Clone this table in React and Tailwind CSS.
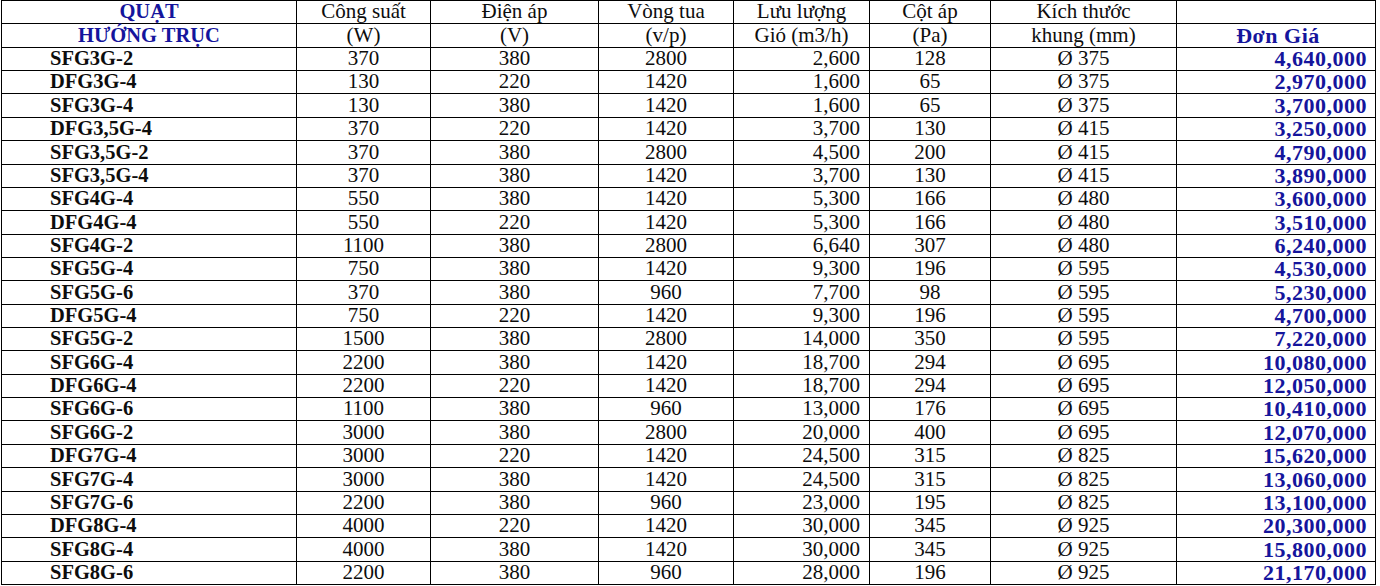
import React from 'react';

// Bảng giá quạt hướng trục
const rows = [
  ['SFG3G-2', '370', '380', '2800', '2,600', '128', '375', '4,640,000'],
  ['DFG3G-4', '130', '220', '1420', '1,600', '65', '375', '2,970,000'],
  ['SFG3G-4', '130', '380', '1420', '1,600', '65', '375', '3,700,000'],
  ['DFG3,5G-4', '370', '220', '1420', '3,700', '130', '415', '3,250,000'],
  ['SFG3,5G-2', '370', '380', '2800', '4,500', '200', '415', '4,790,000'],
  ['SFG3,5G-4', '370', '380', '1420', '3,700', '130', '415', '3,890,000'],
  ['SFG4G-4', '550', '380', '1420', '5,300', '166', '480', '3,600,000'],
  ['DFG4G-4', '550', '220', '1420', '5,300', '166', '480', '3,510,000'],
  ['SFG4G-2', '1100', '380', '2800', '6,640', '307', '480', '6,240,000'],
  ['SFG5G-4', '750', '380', '1420', '9,300', '196', '595', '4,530,000'],
  ['SFG5G-6', '370', '380', '960', '7,700', '98', '595', '5,230,000'],
  ['DFG5G-4', '750', '220', '1420', '9,300', '196', '595', '4,700,000'],
  ['SFG5G-2', '1500', '380', '2800', '14,000', '350', '595', '7,220,000'],
  ['SFG6G-4', '2200', '380', '1420', '18,700', '294', '695', '10,080,000'],
  ['DFG6G-4', '2200', '220', '1420', '18,700', '294', '695', '12,050,000'],
  ['SFG6G-6', '1100', '380', '960', '13,000', '176', '695', '10,410,000'],
  ['SFG6G-2', '3000', '380', '2800', '20,000', '400', '695', '12,070,000'],
  ['DFG7G-4', '3000', '220', '1420', '24,500', '315', '825', '15,620,000'],
  ['SFG7G-4', '3000', '380', '1420', '24,500', '315', '825', '13,060,000'],
  ['SFG7G-6', '2200', '380', '960', '23,000', '195', '825', '13,100,000'],
  ['DFG8G-4', '4000', '220', '1420', '30,000', '345', '925', '20,300,000'],
  ['SFG8G-4', '4000', '380', '1420', '30,000', '345', '925', '15,800,000'],
  ['SFG8G-6', '2200', '380', '960', '28,000', '196', '925', '21,170,000'],
];

const cell = 'border-r border-b border-black flex items-end whitespace-nowrap';

const Cell = ({ className = '', children }) => (
  <div className={`${cell} ${className}`}>
    <span className="leading-[23px]">{children}</span>
  </div>
);

const App = () => {
  return (
    <div className="min-h-screen bg-white">
      <div className="ml-px w-[1375px] grid grid-cols-[295px_134px_168px_135px_136px_121px_186px_199px] auto-rows-[23.36px] border-t border-l border-black font-['Liberation_Serif',serif] text-[21px] text-[#0d0d0d]">
        {/* header row 1 */}
        <Cell className="justify-center font-bold text-[20.5px] text-[#15159c]">QUẠT</Cell>
        <Cell className="justify-center">Công suất</Cell>
        <Cell className="justify-center">Điện áp</Cell>
        <Cell className="justify-center">Vòng tua</Cell>
        <Cell className="justify-center">Lưu lượng</Cell>
        <Cell className="justify-center">Cột áp</Cell>
        <Cell className="justify-center">Kích thước</Cell>
        <Cell className="justify-center"></Cell>

        {/* header row 2 */}
        <Cell className="justify-center font-bold text-[20.5px] text-[#15159c]">HƯỚNG TRỤC</Cell>
        <Cell className="justify-center">(W)</Cell>
        <Cell className="justify-center">(V)</Cell>
        <Cell className="justify-center">(v/p)</Cell>
        <Cell className="justify-center">Gió (m3/h)</Cell>
        <Cell className="justify-center">(Pa)</Cell>
        <Cell className="justify-center">khung (mm)</Cell>
        <Cell className="justify-center pl-[4px] font-bold text-[22px] tracking-[0.5px] text-[#15159c]">Đơn Giá</Cell>

        {rows.map((r) => (
          <React.Fragment key={r[0]}>
            <Cell className="pl-[48px] font-bold text-[20.5px]">{r[0]}</Cell>
            <Cell className="justify-center">{r[1]}</Cell>
            <Cell className="justify-center">{r[2]}</Cell>
            <Cell className="justify-center">{r[3]}</Cell>
            <Cell className="justify-end pr-[9px]">{r[4]}</Cell>
            <Cell className="justify-center">{r[5]}</Cell>
            <Cell className="justify-center">Ø {r[6]}</Cell>
            <Cell className="justify-end pr-[8px] font-bold text-[22px] tracking-[0.5px] text-[#15159c]">{r[7]}</Cell>
          </React.Fragment>
        ))}
      </div>
    </div>
  );
};

export default App;
